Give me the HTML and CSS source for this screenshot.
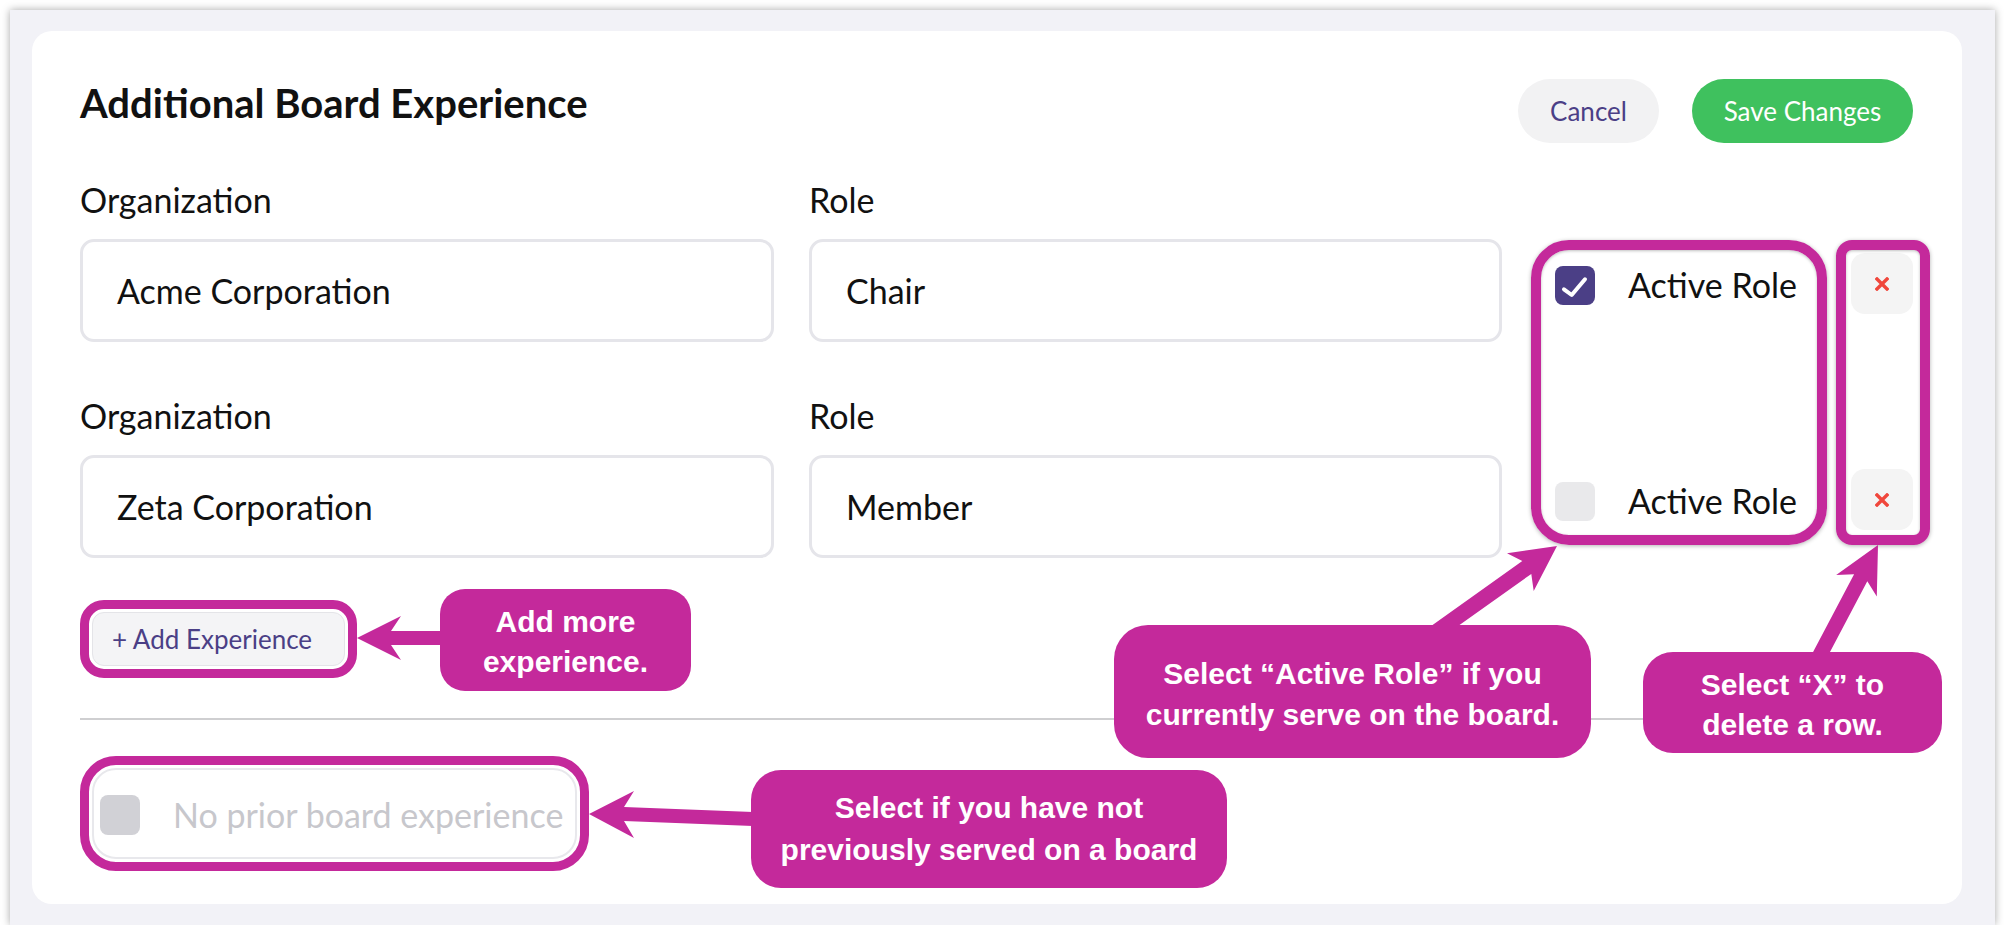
FILE: index.html
```html
<!DOCTYPE html>
<html lang="en">
<head>
<meta charset="utf-8">
<title>Additional Board Experience</title>
<link rel="stylesheet" href="styles.css">
</head>
<body>
<div class="frame">
  <div class="card">
    <header class="head">
      <h1 class="title">Additional Board Experience</h1>
      <div class="actions">
        <button class="btn btn-cancel">Cancel</button>
        <button class="btn btn-save">Save Changes</button>
      </div>
    </header>

    <div class="row">
      <div class="field">
        <div class="label">Organization</div>
        <div class="input">Acme Corporation</div>
      </div>
      <div class="field">
        <div class="label">Role</div>
        <div class="input">Chair</div>
      </div>
      <div class="active">
        <span class="cb cb-on">
          <svg width="40" height="39" viewBox="0 0 40 39"><path d="M9 23.3 L16.7 29 L30 13.3" fill="none" stroke="#fff" stroke-width="4" stroke-linecap="round" stroke-linejoin="round"/></svg>
        </span>
        <span class="active-label">Active Role</span>
      </div>
      <button class="del" aria-label="Delete row">
        <svg width="14" height="14" viewBox="0 0 14 14"><path d="M2 2 L12 12 M12 2 L2 12" stroke="#f0473c" stroke-width="3.4" stroke-linecap="square"/></svg>
      </button>
    </div>

    <div class="row row-2">
      <div class="field">
        <div class="label">Organization</div>
        <div class="input">Zeta Corporation</div>
      </div>
      <div class="field">
        <div class="label">Role</div>
        <div class="input">Member</div>
      </div>
      <div class="active">
        <span class="cb cb-off"></span>
        <span class="active-label">Active Role</span>
      </div>
      <button class="del" aria-label="Delete row">
        <svg width="14" height="14" viewBox="0 0 14 14"><path d="M2 2 L12 12 M12 2 L2 12" stroke="#f0473c" stroke-width="3.4" stroke-linecap="square"/></svg>
      </button>
    </div>

    <button class="add">+ Add Experience</button>

    <div class="divider"></div>

    <div class="noprior">
      <span class="cb cb-gray"></span>
      <span class="noprior-label">No prior board experience</span>
    </div>

    <!-- annotations -->
    <div class="mark mark-active"></div>
    <div class="mark mark-del"></div>

    <svg class="arrows" width="1930" height="873" viewBox="32 31 1930 873">
      <polygon fill="#c4299b" points="357,638 401,616 391,631 442,631 442,645 391,645 401,660"/>
      <polygon fill="#c4299b" points="589,814 634,791 624,807 753,812 753,826 624,821 634,838"/>
      <polygon fill="#c4299b" points="1557,546 1507,553.3 1522.3,561.1 1430.1,626.8 1439.1,639.6 1531.3,573.9 1533.7,590.9"/>
      <polygon fill="#c4299b" points="1878,545 1836.2,575 1854.1,574.2 1810.7,656.4 1823.9,663.4 1867.3,581.2 1876.8,596.4"/>
    </svg>

    <div class="callout callout-add">Add more<br>experience.</div>
    <div class="callout callout-active">Select “Active Role” if you<br>currently serve on the board.</div>
    <div class="callout callout-del">Select “X” to<br>delete a row.</div>
    <div class="callout callout-none">Select if you have not<br>previously served on a board</div>
  </div>
</div>
</body>
</html>
```

FILE: styles.css
```css
* { box-sizing: border-box; }

html, body {
  margin: 0;
  background: #ffffff;
}

body {
  padding: 10px 0 0 10px;
  font-family: Lato, "Noto Sans", sans-serif;
  color: #111111;
}

.frame {
  width: 1985px;
  height: 915px;
  background: #f2f2f7;
  padding: 21px 33px 21px 22px;
  box-shadow: 0 0 8px rgba(0, 0, 0, 0.35);
}

.card {
  position: relative;
  width: 1930px;
  height: 873px;
  background: #ffffff;
  border-radius: 20px;
  padding: 48px 49px 45px 48px;
}

/* header */
.head {
  display: flex;
  justify-content: space-between;
  align-items: flex-start;
  height: 64px;
}

.title {
  margin: 0;
  font-size: 40px;
  line-height: 48px;
  font-weight: 700;
  color: #111111;
}

.actions {
  display: flex;
  gap: 33px;
}

.btn {
  height: 64px;
  border: none;
  border-radius: 32px;
  font-family: Lato, sans-serif;
  font-size: 26px;
  padding: 0;
  display: flex;
  align-items: center;
  justify-content: center;
}

.btn-cancel {
  width: 141px;
  background: #f2f2f3;
  color: #4b3f86;
}

.btn-save {
  width: 221px;
  background: #3fc15e;
  color: #ffffff;
}

/* rows */
.row {
  display: grid;
  grid-template-columns: 694px 693px 1fr 62px;
  column-gap: 35px;
  margin-top: 38px;
}

.row-2 { margin-top: 55px; }

.label {
  font-size: 34px;
  line-height: 38px;
  color: #111111;
}

.input {
  margin-top: 20px;
  height: 103px;
  border: 3px solid #e5e5ea;
  border-radius: 14px;
  padding-left: 34px;
  display: flex;
  align-items: center;
  font-size: 34px;
  line-height: 38px;
  color: #111111;
}

.active {
  align-self: end;
  margin-bottom: 37px;
  height: 40px;
  display: flex;
  align-items: center;
  padding-left: 18px;
}

.cb {
  flex: none;
  display: block;
  width: 40px;
  height: 39px;
  border-radius: 8px;
}

.cb svg { display: block; }

.cb-on { background: #4b3f86; }
.cb-off { background: #e9e9eb; }

.active-label {
  margin-left: 33px;
  font-size: 34px;
  line-height: 38px;
  color: #111111;
  white-space: nowrap;
}

.del {
  align-self: end;
  margin-bottom: 28px;
  width: 62px;
  height: 61px;
  border: none;
  border-radius: 14px;
  background: #f4f4f4;
  padding: 0;
  display: flex;
  align-items: center;
  justify-content: center;
}

.del svg { display: block; }

/* add */
.add {
  display: flex;
  align-items: center;
  margin: 54px 0 0 12px;
  width: 253px;
  height: 54px;
  border: 1px solid #e4e4e8;
  border-radius: 12px;
  background: #f4f4f6;
  padding: 0 0 0 19px;
  font-family: Lato, sans-serif;
  font-size: 26px;
  color: #4b3f86;
  outline: 9px solid #c4299b;
  outline-offset: 3px;
}

.divider {
  margin-top: 52px;
  height: 2px;
  background: #cfcfd1;
}

/* no prior */
.noprior {
  margin: 48px 0 0 12px;
  width: 485px;
  height: 91px;
  border: 2px solid #e8e8ec;
  border-radius: 24px;
  display: flex;
  align-items: center;
  padding-left: 6px;
  padding-top: 3px;
  outline: 9px solid #c4299b;
  outline-offset: 3px;
}

.cb-gray {
  width: 40px;
  height: 40px;
  background: #d1d1d6;
}

.noprior-label {
  margin-left: 33px;
  font-size: 34px;
  line-height: 38px;
  color: #c7c7cc;
  white-space: nowrap;
}

/* annotations */
.mark {
  position: absolute;
  border: 10px solid #c4299b;
  box-shadow: 0 1px 4px rgba(0, 0, 0, 0.3), inset 0 1px 3px rgba(0, 0, 0, 0.25);
}

.mark-active {
  left: 1499px;
  top: 209px;
  width: 296px;
  height: 305px;
  border-radius: 38px;
}

.mark-del {
  left: 1804px;
  top: 209px;
  width: 94px;
  height: 305px;
  border-radius: 16px;
}

.arrows {
  position: absolute;
  left: 0;
  top: 0;
  pointer-events: none;
}

.callout {
  position: absolute;
  background: #c4299b;
  color: #ffffff;
  font-family: "Liberation Sans", Arial, sans-serif;
  font-weight: 700;
  font-size: 30px;
  line-height: 41px;
  text-align: center;
  display: flex;
  align-items: center;
  justify-content: center;
}

.callout-add {
  left: 408px;
  top: 558px;
  width: 251px;
  height: 102px;
  border-radius: 25px;
  line-height: 40px;
  padding-top: 4px;
}

.callout-active {
  left: 1082px;
  top: 594px;
  width: 477px;
  height: 133px;
  border-radius: 34px;
  padding-top: 4px;
}

.callout-del {
  left: 1611px;
  top: 621px;
  width: 299px;
  height: 101px;
  border-radius: 30px;
  line-height: 40px;
  padding-top: 4px;
}

.callout-none {
  left: 719px;
  top: 739px;
  width: 476px;
  height: 118px;
  border-radius: 30px;
  line-height: 42px;
}
```
